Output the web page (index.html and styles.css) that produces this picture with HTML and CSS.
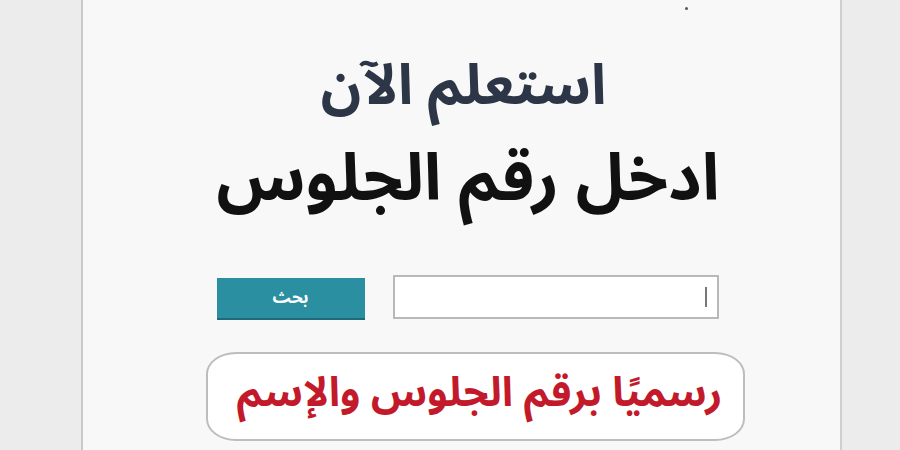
FILE: index.html
```html
<!DOCTYPE html>
<html lang="ar" dir="rtl">
<head>
<meta charset="utf-8">
<link rel="stylesheet" href="styles.css">
</head>
<body>
<div class="page">
  <div class="gutter gutter-left"></div>
  <main class="panel">
    <span class="dot"></span>
    <h1 class="title">استعلم الآن</h1>
    <h2 class="subtitle">ادخل رقم الجلوس</h2>
    <form class="search">
      <div class="field"><span class="caret"></span></div>
      <button type="button" class="btn">بحث</button>
    </form>
    <div class="note">رسميًا برقم الجلوس والإسم</div>
  </main>
  <div class="gutter gutter-right"></div>
</div>
</body>
</html>
```
FILE: styles.css
```css
html, body {
  margin: 0;
  padding: 0;
  width: 900px;
  height: 450px;
  overflow: hidden;
  background: #ebebeb;
  font-family: "Noto Sans Arabic", "DejaVu Sans", sans-serif;
}
.page {
  direction: ltr;
  display: flex;
  height: 450px;
}
.gutter {
  background: #ececec;
  flex: none;
}
.gutter-left { width: 81px; }
.gutter-right { flex: 1; }
.panel {
  direction: rtl;
  position: relative;
  width: 757px;
  flex: none;
  background: #f8f8f8;
  border-left: 2px solid #c9c9c9;
  border-right: 2px solid #cfcfcf;
  display: flex;
  flex-direction: column;
  align-items: center;
}
.dot {
  position: absolute;
  left: 602px;
  top: 7px;
  width: 3px;
  height: 3px;
  border-radius: 50%;
  background: #555;
}
.title {
  margin: 51px 0 0 4px;
  font-size: 56px;
  font-weight: bold;
  color: #2d3646;
  line-height: 70px;
  height: 70px;
  white-space: nowrap;
}
.subtitle {
  margin: 19px 0 0 13px;
  font-size: 65px;
  font-weight: bold;
  color: #111;
  line-height: 80px;
  height: 80px;
  white-space: nowrap;
}
.search {
  margin: 54px 0 0 12px;
  display: flex;
  align-items: center;
  gap: 28px;
}
.field {
  width: 326px;
  height: 44px;
  border: 2px solid #b8b8b8;
  background: #fff;
  display: flex;
  align-items: center;
  padding-right: 10px;
  box-sizing: border-box;
}
.caret {
  width: 2px;
  height: 20px;
  background: #777;
}
.btn {
  width: 148px;
  height: 42px;
  border: none;
  border-bottom: 2px solid #1d6a78;
  background: #2a8fa1;
  color: #fff;
  font-family: "Noto Sans Arabic", "DejaVu Sans", sans-serif;
  font-weight: bold;
  font-size: 17px;
  margin-top: 4px;
  padding: 0;
}
.note {
  margin: 32px 0 0 28px;
  width: 539px;
  height: 89px;
  box-sizing: border-box;
  border: 2px solid #bdbdbd;
  border-radius: 30px / 22px;
  background: #fff;
  color: #c21a2b;
  font-size: 41px;
  font-weight: bold;
  text-align: center;
  line-height: 78px;
  padding-left: 8px;
  white-space: nowrap;
}
```
